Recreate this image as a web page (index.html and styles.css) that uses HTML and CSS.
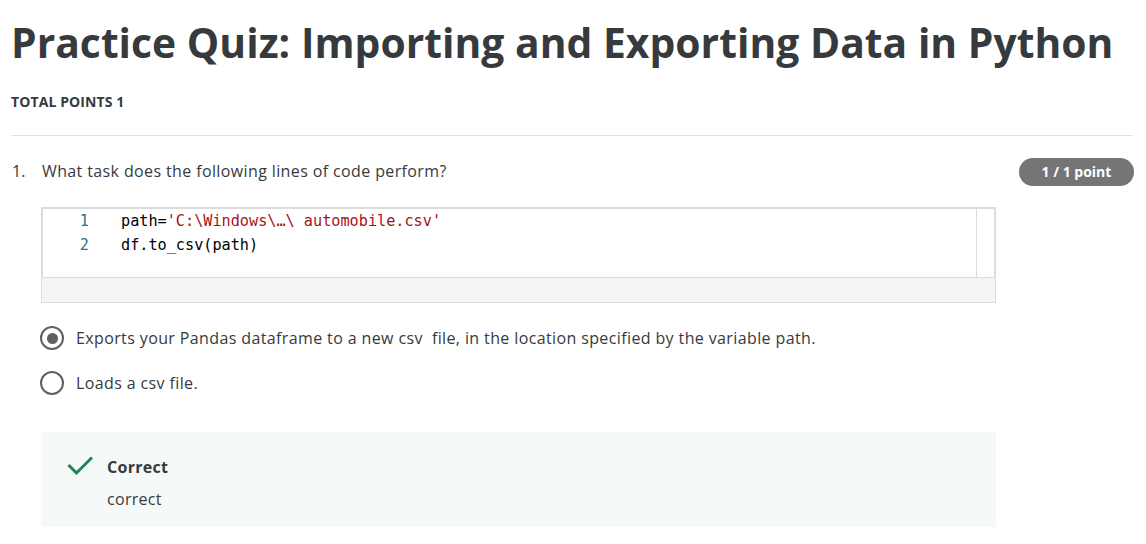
FILE: index.html
```html
<!DOCTYPE html>
<html lang="en">
<head>
<meta charset="utf-8">
<title>Practice Quiz</title>
<link rel="stylesheet" href="styles.css">
</head>
<body>
<main class="page">
  <h1 class="title">Practice Quiz: Importing and Exporting Data in Python</h1>
  <div class="total">TOTAL POINTS 1</div>
  <hr class="divider">
  <section class="question">
    <div class="q-head">
      <div class="q-text"><span class="q-num">1.</span><span>What task does the following lines of code perform?</span></div>
      <div class="badge">1 / 1 point</div>
    </div>
    <div class="q-body">
      <div class="code">
        <div class="editor">
          <div class="lines">
            <div class="line"><span class="ln">1</span><span class="src">path=<span class="str">'C:\Windows\…\ automobile.csv'</span></span></div>
            <div class="line"><span class="ln">2</span><span class="src">df.to_csv(path)</span></div>
          </div>
          <div class="scroll"></div>
        </div>
      </div>
      <div class="options">
        <div class="option"><span class="radio checked"></span><span>Exports your Pandas dataframe to a new csv &nbsp;file, in the location specified by the variable path.</span></div>
        <div class="option"><span class="radio"></span><span>Loads a csv file.</span></div>
      </div>
      <div class="feedback">
        <svg class="check" width="26" height="20" viewBox="0 0 26 20"><path d="M1.5 9 L9.5 17 L25 1.5" fill="none" stroke="#1f8354" stroke-width="3"/></svg>
        <div class="fb-text">
          <div class="fb-title">Correct</div>
          <div class="fb-body">correct</div>
        </div>
      </div>
    </div>
  </section>
</main>
</body>
</html>
```
FILE: styles.css
```css
* { box-sizing: border-box; }
body {
  margin: 0;
  background: #fff;
  font-family: "Open Sans", "Noto Sans", sans-serif;
  color: #373a3c;
}
.page {
  padding: 14px 12px 0 11px;
}
.title {
  margin: 0;
  font-size: 40.8px;
  line-height: 57px;
  font-weight: 700;
  color: #373a3c;
  white-space: nowrap;
  letter-spacing: 0.03px;
}
.total {
  margin-top: 22px;
  font-size: 14px;
  line-height: 18px;
  font-weight: 700;
  letter-spacing: 0.1px;
  color: #373a3c;
}
.divider {
  margin: 24px 1px 0 0;
  border: 0;
  border-top: 1px solid #e1e1e1;
  height: 0;
}
.question {
  margin-top: 22px;
}
.q-head {
  display: flex;
  justify-content: space-between;
  align-items: flex-start;
}
.q-text {
  display: flex;
  margin-top: 1px;
  font-size: 16px;
  line-height: 24px;
  letter-spacing: 0.38px;
}
.q-num {
  width: 31px;
  padding-left: 1px;
  letter-spacing: 0;
}
.badge {
  width: 115px;
  height: 28px;
  border-radius: 14px;
  background: #757575;
  color: #fff;
  font-size: 14px;
  font-weight: 700;
  line-height: 28px;
  text-align: center;
}
.q-body {
  margin-left: 30px;
  width: 955px;
}
.code {
  margin-top: 21px;
  border: 1px solid #dcdcdc;
  background: #f4f4f4;
  height: 96px;
}
.editor {
  display: flex;
  height: 70px;
  background: #fff;
  border: 1px solid #dcdcdc;
}
.lines {
  flex: 1;
  padding-top: 1px;
  font-family: "DejaVu Sans Mono", "Liberation Mono", monospace;
  font-size: 15.2px;
  line-height: 23.5px;
  color: #000;
}
.line {
  display: flex;
}
.ln {
  width: 46px;
  text-align: right;
  color: #237893;
}
.src {
  margin-left: 32px;
  white-space: pre;
}
.str {
  color: #a31515;
}
.scroll {
  width: 18px;
  border-left: 1px solid #dcdcdc;
}
.options {
  margin-top: 23px;
  display: flex;
  flex-direction: column;
  gap: 21px;
}
.option {
  display: flex;
  align-items: center;
  font-size: 16px;
  line-height: 24px;
  letter-spacing: 0.38px;
  margin-left: -1px;
}
.radio {
  width: 24px;
  height: 24px;
  border-radius: 50%;
  border: 2px solid #606060;
  margin-right: 12px;
  display: flex;
  align-items: center;
  justify-content: center;
  flex: none;
}
.radio.checked {
  border-width: 2.5px;
}
.radio.checked::after {
  content: "";
  width: 11px;
  height: 11px;
  border-radius: 50%;
  background: #606060;
}
.feedback {
  margin-top: 37px;
  background: #f5f9f8;
  display: flex;
  align-items: flex-start;
  padding: 23px 0 16px 26px;
}
.check {
  margin-top: 1px;
  margin-right: 14px;
  flex: none;
}
.fb-text {
  font-size: 16px;
  line-height: 24px;
  letter-spacing: 0.3px;
}
.fb-title {
  font-weight: 700;
}
.fb-body {
  margin-top: 8px;
}
```
